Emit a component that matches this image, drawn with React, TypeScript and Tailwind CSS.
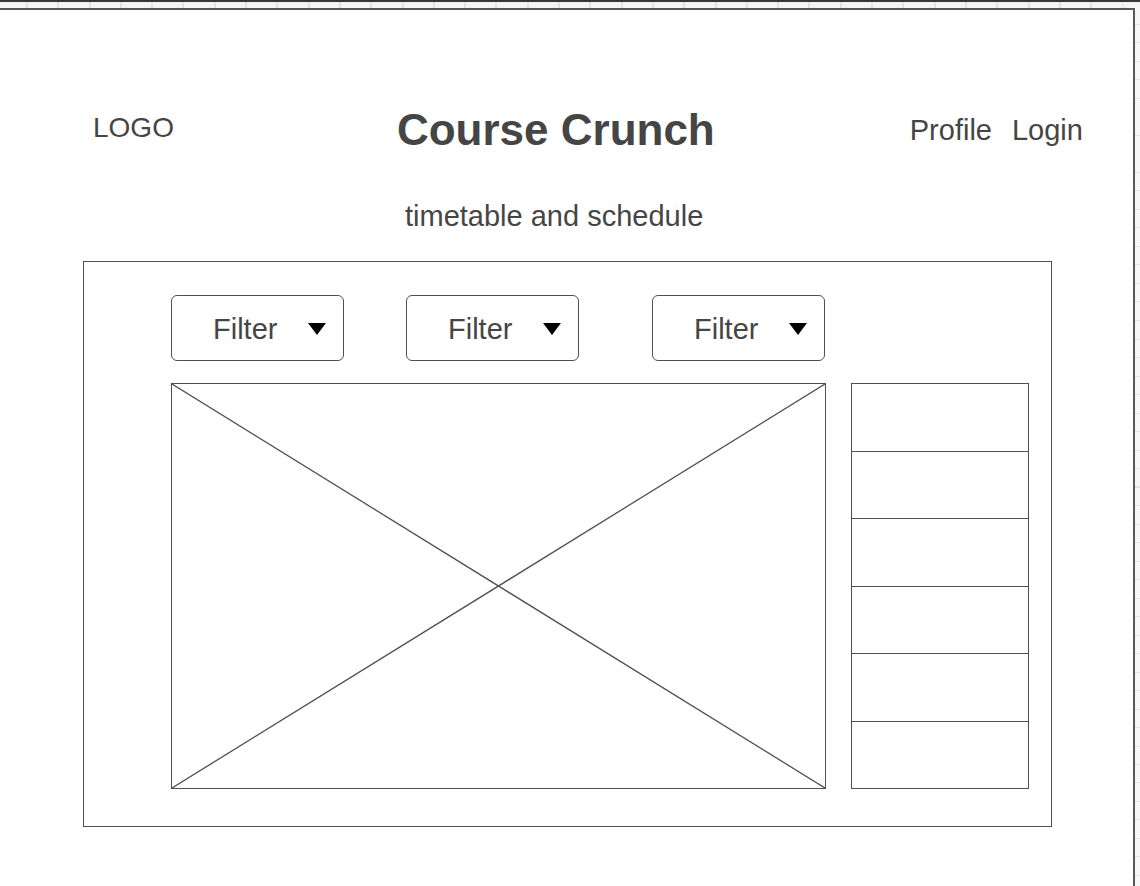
const FILTER_GAPS = ["ml-0", "ml-[62px]", "ml-[73px]"];

export default function App() {
  return (
    <div className="h-[886px] w-[1140px] overflow-hidden bg-white font-['Liberation_Sans',Arial,sans-serif] text-[#454545]">
      {/* editor chrome: top ruler */}
      <div className="h-[2px] bg-[#35373b]" />
      <div className="h-[6px] bg-[#f4f4f4] bg-[repeating-linear-gradient(90deg,transparent_0px,transparent_26px,#e2e2e2_26px,#e2e2e2_28px,transparent_28px,transparent_31.3px)]" />
      <div className="flex h-[878px]">
        <div className="w-[1135px] border-t-2 border-r-2 border-[#585858]">
          <Header />
          <p className="mt-[50px] ml-[405px] w-[310px] text-[29px] leading-none">timetable and schedule</p>
          <Board />
        </div>
        <div className="flex-1 bg-[#f7f7f7] bg-[repeating-linear-gradient(180deg,transparent_0px,transparent_16px,#e4e4e4_16px,#e4e4e4_17px,transparent_17px,transparent_18.5px)]" />
      </div>
    </div>
  );
}

function Header() {
  return (
    <header className="flex items-start pt-[98px]">
      <span className="mt-[6px] ml-[93px] text-[28px] leading-none">LOGO</span>
      <h1 className="ml-[223px] text-[44px] font-bold leading-none">Course Crunch</h1>
      <nav className="mt-[8px] ml-[195px] flex gap-[20px] text-[29px] leading-none">
        <a>Profile</a>
        <a>Login</a>
      </nav>
    </header>
  );
}

function Board() {
  return (
    <section className="mt-[30px] ml-[83px] h-[566px] w-[969px] border border-[#505050] pt-[33px] pl-[87px]">
      <div className="flex">
        {FILTER_GAPS.map((gap, i) => (
          <FilterButton key={i} className={gap} />
        ))}
      </div>
      <div className="mt-[22px] flex gap-[25px]">
        <div className="relative h-[406px] w-[655px] border border-[#505050]">
          <svg className="absolute inset-0 h-full w-full" viewBox="0 0 100 100" preserveAspectRatio="none">
            <line x1="0" y1="0" x2="100" y2="100" stroke="#505050" strokeWidth="1.3" vectorEffect="non-scaling-stroke" />
            <line x1="100" y1="0" x2="0" y2="100" stroke="#505050" strokeWidth="1.3" vectorEffect="non-scaling-stroke" />
          </svg>
        </div>
        <ul className="flex h-[406px] w-[178px] flex-col border border-[#505050]">
          {Array.from({ length: 6 }).map((_, i) => (
            <li key={i} className="flex-1 border-b border-[#505050] last:border-b-0" />
          ))}
        </ul>
      </div>
    </section>
  );
}

function FilterButton({ className }: { className: string }) {
  return (
    <button className={`${className} flex h-[66px] w-[173px] items-center rounded-[6px] border border-[#505050] pt-[2px] pr-[17px] pl-[41px]`}>
      <span className="text-[29px] leading-none">Filter</span>
      <svg className="ml-auto" width="18" height="12" viewBox="0 0 18 12">
        <polygon points="0,0 18,0 9,12" fill="#000" />
      </svg>
    </button>
  );
}
